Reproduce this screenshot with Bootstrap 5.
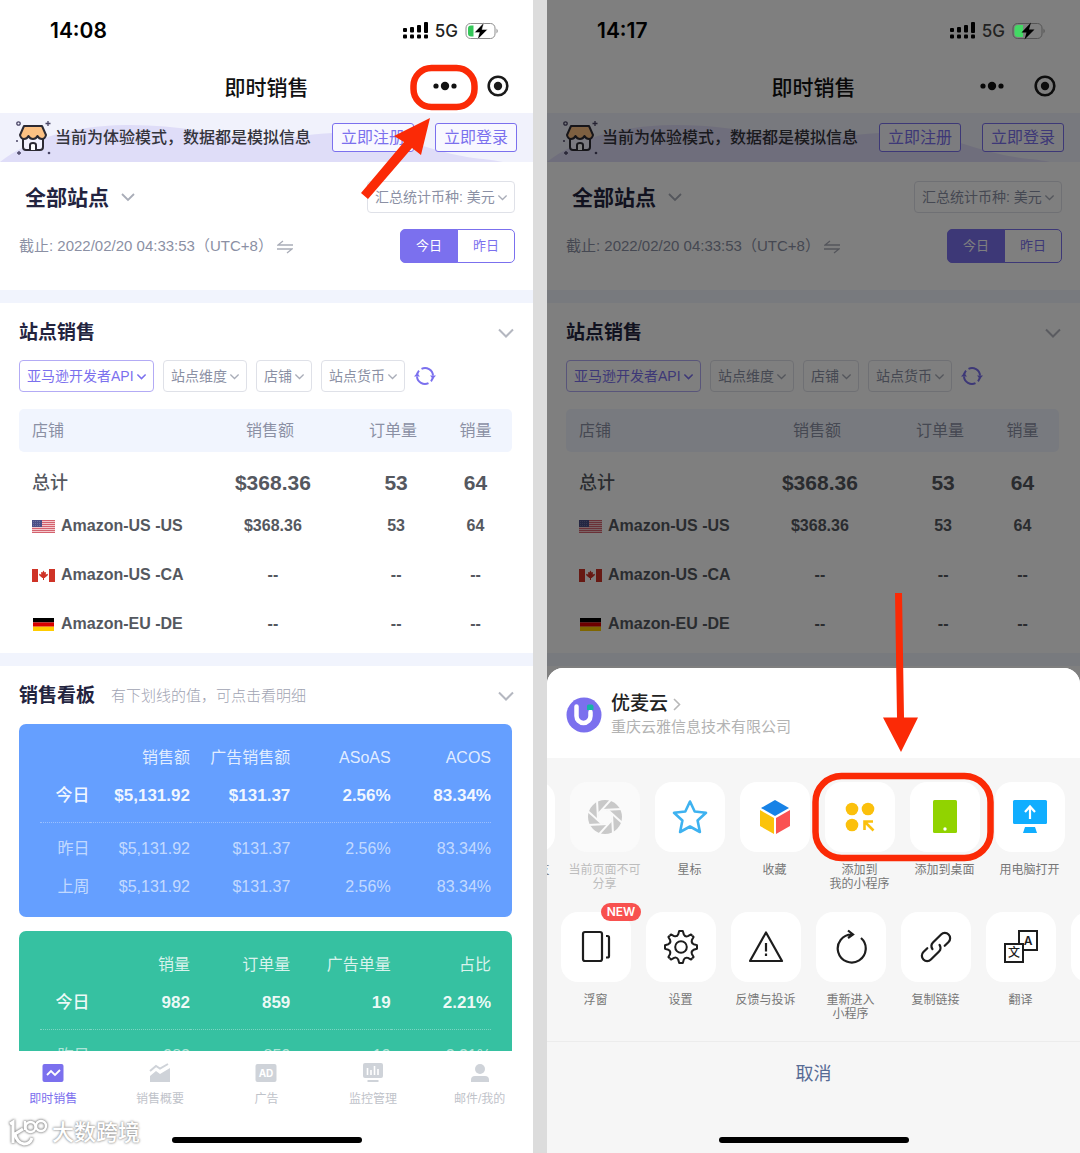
<!DOCTYPE html>
<html lang="zh-CN">
<head>
<meta charset="utf-8">
<meta name="viewport" content="width=device-width, initial-scale=1">
<title>即时销售</title>
<link rel="stylesheet" href="https://cdn.jsdelivr.net/npm/bootstrap@5.3.0/dist/css/bootstrap.min.css">
<style>
:root{--violet:#7b70ee;--ink:#23243f;--soft:#8b90a4;--band:#f1f4fd}
body{font-family:"Liberation Sans","Noto Sans CJK SC",sans-serif;background:#dcdcdc;color:#55585f;line-height:1.25}
button{font-family:inherit}
.stage{gap:14px;height:100vh;min-height:700px}
.phone{flex:1 1 0;min-width:0;background:#fff}
.statusbar{height:60px;padding:2px 34px 0 50px;color:#000;z-index:3}
.clock{font:600 21px/24px Inter,sans-serif}
.net{font:500 17px/24px Inter,sans-serif;color:#222}
.net-row{gap:7px}
.titlebar{height:53px;padding-top:2px}
.titlebar h1{font-size:21px;font-weight:500;color:#111;line-height:28px}
.capsule{right:24px;top:15px;gap:30px}
.capsule button,.plain{border:0;background:none;padding:0;line-height:0}
.trial{height:49px;padding:0 16px 0 15px;background:#f1f2fc}
.trial .wave{inset:0;width:100%;height:100%}
.trial-text{font-size:16px;font-weight:500;color:#34343c;white-space:nowrap;margin-left:4px}
.btn-trial{height:29px;padding:0 8px;border:1px solid var(--violet);border-radius:3px;color:var(--violet);font-size:16px;line-height:26px;background:#f8f8ff}
.trial-actions{gap:21px}
.filters-top{padding:19px 18px 27px 19px}
.pick{width:auto;height:32px;padding:0 19px 0 7px;border:1px solid #dfe1e8;border-radius:4px;font-size:14px;line-height:20px;color:var(--soft);background-color:#fff;background-position:right 6px center;background-size:11px 11px;background-image:url("data:image/svg+xml,%3Csvg xmlns='http://www.w3.org/2000/svg' viewBox='0 0 16 16'%3E%3Cpath d='M2 5l6 6 6-6' fill='none' stroke='%23a9adb8' stroke-width='1.8'/%3E%3C/svg%3E")}
.pick-on{color:var(--violet);border-color:#b3abf5;background-image:url("data:image/svg+xml,%3Csvg xmlns='http://www.w3.org/2000/svg' viewBox='0 0 16 16'%3E%3Cpath d='M2 5l6 6 6-6' fill='none' stroke='%237b70ee' stroke-width='2.2'/%3E%3C/svg%3E")}
.pick-site{border:0;font-size:21px;line-height:32px;font-weight:700;color:var(--ink);padding:1px 28px 0 6px;background-position:right 1px center;background-size:16px 16px}
.asof{font-size:15px;color:var(--soft);white-space:nowrap}
.day-switch .btn{width:58px;height:34px;padding:0;font-size:13px;color:var(--violet);border:1px solid var(--violet);border-radius:5px}
.day-switch .btn.active{background:var(--violet);color:#fff;border-color:var(--violet)}
.band{height:13px;background:var(--band)}
.block{padding-top:17px}
.block-head{padding:0 19px}
.block-head h2{font-size:19px;line-height:26px;font-weight:700;color:var(--ink)}
.board-head{margin-bottom:15px}
.hint{font-size:15px;color:#9fa3b2;font-weight:300}
.picks{gap:9px;padding:0 19px;margin-top:14px}
.sheet-table{table-layout:fixed;width:100%;border-collapse:separate;border-spacing:0}
.sheet-table th,.sheet-table td{padding:0;text-align:center;vertical-align:middle}
.sheet-table th:first-child{text-align:left;padding-left:13px;white-space:nowrap}
.sheet-table td:last-child,.sheet-table thead th:last-child{padding-right:4px}
.sheet-table thead th{height:43px;padding-right:6px;background:#f1f5fe;font-size:16px;font-weight:400;color:var(--soft)}
.sheet-table thead th:first-child{border-radius:5px 0 0 5px}
.sheet-table thead th:last-child{border-radius:0 5px 5px 0}
.sheet-table tbody th,.sheet-table tbody td{height:49px;font-size:16px;font-weight:700;color:#55585f}
.sheet-table .sum th,.sheet-table .sum td{padding-top:14px;font-size:21px}
.sheet-table .sum th{font-size:18px;font-weight:500}
.flag{margin-right:6px}
.sheet-wrap{padding:0 21px 5px 19px;margin-top:17px}
.panel{margin:0 21px 14px 19px;padding:15px 21px 11px;border-radius:7px}
.panel-blue{background:#659fff}
.panel-green{background:#36c1a1}
.panel table{table-layout:fixed;width:100%;border-collapse:separate;border-spacing:0;color:#fff}
.panel th,.panel td{height:38px;padding:0;text-align:right;font-size:16px;font-weight:400;white-space:nowrap;vertical-align:middle;color:rgba(255,255,255,.62)}
.panel thead th{color:rgba(255,255,255,.82)}
.panel .now th,.panel .now td{height:46px;padding-bottom:7px;border-bottom:1px dotted rgba(255,255,255,.35);font-size:17px;font-weight:700;color:rgba(255,255,255,.92)}
.panel .now th{font-weight:500}
.panel .prev th,.panel .prev td{height:45px;padding-top:7px}
.tabbar{height:102px;background:#fff;padding-top:10px}
.tabbar a{flex:1 1 0;text-decoration:none;color:#bfc3ca;font-size:12px;line-height:16px;gap:6px}
.tabbar a.on{color:var(--violet)}
.homebar{width:190px;height:6px;border-radius:3px;background:#000}
.tabbar .homebar,.share .homebar{bottom:10px;left:50%;transform:translateX(-50%)}
.stamp{left:8px;bottom:5px;gap:4px;color:#fff;font-size:22px;line-height:28px;font-weight:500;text-shadow:0 0 2px #888,0 0 3px #aaa}
.stamp svg{filter:drop-shadow(0 0 1px #888) drop-shadow(0 0 1px #aaa)}
.notes{left:0;top:0;pointer-events:none;z-index:6;overflow:visible}
.veil{inset:0;background:rgba(0,0,0,.5);z-index:2}
.share{left:0;right:0;bottom:0;height:485px;background:#f6f6f6;border-radius:16px 16px 0 0;z-index:4;overflow:hidden}
.share-head{height:90px;background:#fff;padding:4px 19px 0;gap:9px}
.share-name{font-size:19px;line-height:24px;font-weight:500;color:#222}
.share-org{font-size:15px;line-height:22px;color:#b3b3b3}
.strip{align-items:flex-start;overflow:hidden}
.strip-a{padding-top:24px;margin-left:-70px;height:145px}
.strip-b{padding:9px 0 0 6px;height:138px}
.act{flex:0 0 85px;border:0;background:none;padding:0;font-size:12px;line-height:14px;color:#777;white-space:nowrap}
.act .tile{width:70px;height:70px;border-radius:17px;background:#fff;margin:0 auto 11px}
.act:disabled{color:#bdbdbd}
.act:disabled .tile{background:#fafafa}
.tag-new{left:48px;top:-9px;z-index:1;width:40px;height:18px;border-radius:9px;background:#f8514f;color:#fff;font:600 12px/18px Inter,sans-serif;text-align:center}
.cancel{border:0;border-top:1px solid #ececec;background:#f6f6f6;width:100%;height:66px;color:#576b95;font-size:18px}
</style>
<script src="https://cdn.jsdelivr.net/npm/bootstrap@5.3.0/dist/js/bootstrap.bundle.min.js"></script>
</head>
<body>
<svg width="0" height="0" class="position-absolute" aria-hidden="true">
  <symbol id="i-signal" viewBox="0 0 26 18">
    <g fill="#000"><rect x="1" y="12.500" width="4" height="4" rx="1"/><rect x="8" y="12.500" width="4" height="4" rx="1"/><rect x="15" y="12.500" width="4" height="4" rx="1"/><rect x="22" y="12.500" width="4" height="4" rx="1"/>
    <rect x="1" y="6" width="4" height="4" rx="1"/><rect x="8" y="5" width="4" height="5.500" rx="1"/><rect x="15" y="3" width="4" height="7.500" rx="1"/><rect x="22" y="0" width="4" height="11" rx="1"/></g>
  </symbol>
  <symbol id="i-battery" viewBox="0 0 34 18">
    <rect x="1" y="1.500" width="29" height="15" rx="4.500" fill="none" stroke="#8d8d8d"/><path d="M31.500 6.500q2.500 2.500 0 5z" fill="#8d8d8d"/>
    <path d="M6 3.500H8.500V14.500H6a3 3 0 0 1-3-3v-5a3 3 0 0 1 3-3z" fill="#34c759"/>
    <path d="M19 0.500L9.500 10.500h5L12.500 17.500 22.500 7.500h-5.500z" fill="#000" stroke="#fff" stroke-opacity=".5" stroke-width=".8"/>
  </symbol>
  <symbol id="i-battery-dim" viewBox="0 0 34 18">
    <rect x="1" y="1.500" width="29" height="15" rx="4.500" fill="none" stroke="#555"/><path d="M31.500 6.500q2.500 2.500 0 5z" fill="#555"/>
    <path d="M6 3H11V15H6a3.500 3.500 0 0 1-3.500-3.500v-5A3.500 3.500 0 0 1 6 3z" fill="#43d964"/>
    <path d="M19 0.500L9.500 10.500h5L12.500 17.500 22.500 7.500h-5.500z" fill="#000"/>
  </symbol>
  <symbol id="i-dots" viewBox="0 0 24 22"><g fill="#111"><circle cx="3" cy="11" r="2.600"/><circle cx="12" cy="11" r="4.200"/><circle cx="21" cy="11" r="2.600"/></g></symbol>
  <symbol id="i-target" viewBox="0 0 22 22"><circle cx="11" cy="11" r="9.300" fill="none" stroke="#1a1a1a" stroke-width="2.600"/><circle cx="11" cy="11" r="4.200" fill="#1a1a1a"/></symbol>
  <symbol id="i-store" viewBox="0 0 36 36">
    <path d="M8 18v9q0 3 3 3h14q3 0 3-3v-9" fill="#f4f3ff" stroke="#2c2a33" stroke-width="2"/>
    <path d="M9 6h18l4 9q-1 4-4 4t-4.500-3q-1.500 3-4.500 3t-4.500-3q-1.500 3-4.500 3t-4-4z" fill="#fcc183" stroke="#2c2a33" stroke-width="2" stroke-linejoin="round"/>
    <path d="M15 30v-5q0-2 3-2t3 2v5" fill="#fff" stroke="#2c2a33" stroke-width="2"/>
    <g stroke="#4a4666" stroke-width="1.300" fill="none"><circle cx="3.500" cy="3.500" r="1.700"/><path d="M33 1v5M30.500 3.500h5M4 31v4M2 33h4"/></g><circle cx="34" cy="33" r="1.300" fill="#4a4666"/><circle cx="2" cy="21" r="1" fill="#4a4666"/>
  </symbol>
  <symbol id="i-down" viewBox="0 0 16 16"><path d="M1 4.500l7 7 7-7" fill="none" stroke="#b4b7c0" stroke-width="2"/></symbol>
  <symbol id="i-swap" viewBox="0 0 16 14"><path d="M16 5H1L6 1M0 9H15L10 13" fill="none" stroke="#a9adb8" stroke-width="1.300"/></symbol>
  <symbol id="i-refresh" viewBox="0 0 22 20"><g fill="none" stroke="#7b70ee" stroke-width="2"><path d="M3 10A8 8 0 0 1 5 4.700M7.500 2.800A8 8 0 0 1 19 9.500"/><path d="M19 10A8 8 0 0 1 17 15.300M14.500 17.200A8 8 0 0 1 3 10.500"/></g><path d="M0 10.500L3 7l3 3.500zM16 9.500h6L19 13z" fill="#7b70ee"/></symbol>
  <symbol id="f-us" viewBox="0 0 23 13"><rect width="23" height="13" fill="#f3c9cd"/><path d="M0 .500h23M0 2.500h23M0 4.500h23M0 6.500h23M0 8.500h23M0 10.500h23M0 12.500h23" stroke="#d4626e"/><rect width="10" height="7" fill="#4b4f86"/><path d="M1 1.500h8M1 3.500h8M1 5.500h8" stroke="#8587ae" stroke-width=".6" stroke-dasharray="1 1"/></symbol>
  <symbol id="f-ca" viewBox="0 0 23 13"><rect width="23" height="13" fill="#fff"/><path d="M0 0h6v13H0zM17 0h6v13h-6zM11.500 1.500l1.200 2 1.300-.5-.3 2.500 2.300-.8-.4 1.800-3 2.500h-.6V11h-1V9h-.6l-3-2.500L7 4.700l2.300.8L9 3l1.300.5z" fill="#cf3327"/></symbol>
  <symbol id="f-de" viewBox="0 0 23 13"><rect x="1" width="21" height="4.400" fill="#000"/><rect x="1" y="4.400" width="21" height="4.300" fill="#d80000"/><rect x="1" y="8.700" width="21" height="4.300" fill="#fc0"/></symbol>
</svg>

<div class="stage d-flex">
  <!-- Phone one: the page itself -->
  <section class="phone position-relative d-flex flex-column overflow-hidden" aria-label="14:08">
    <header class="statusbar d-flex align-items-center justify-content-between position-relative flex-shrink-0">
      <span class="clock">14:08</span>
      <span class="net-row d-flex align-items-center"><svg width="26" height="18"><use href="#i-signal"/></svg><span class="net">5G</span><svg width="34" height="18"><use href="#i-battery"/></svg></span>
    </header>
    <div class="titlebar position-relative d-flex align-items-center justify-content-center flex-shrink-0">
      <h1 class="m-0">即时销售</h1>
      <div class="capsule position-absolute d-flex"><button type="button" aria-label="更多"><svg width="24" height="22"><use href="#i-dots"/></svg></button><button type="button" aria-label="关闭"><svg width="22" height="22"><use href="#i-target"/></svg></button></div>
    </div>
    <div class="trial position-relative d-flex align-items-center flex-shrink-0">
      <svg class="wave position-absolute" viewBox="0 0 533 49" preserveAspectRatio="none" aria-hidden="true"><path d="M0 49C30 26 70 13 125 12S230 24 270 30C320 16 370 16 420 32S480 44 503 49z" fill="#dfddf8"/></svg>
      <svg class="position-relative flex-shrink-0" width="36" height="36"><use href="#i-store"/></svg>
      <span class="trial-text position-relative">当前为体验模式，数据都是模拟信息</span>
      <div class="trial-actions d-flex ms-auto position-relative"><button type="button" class="btn btn-trial">立即注册</button><button type="button" class="btn btn-trial">立即登录</button></div>
    </div>
    <main class="flex-grow-1 overflow-hidden">
      <div class="filters-top">
        <div class="d-flex justify-content-between">
          <select class="form-select pick pick-site" aria-label="站点"><option>全部站点</option></select>
          <select class="form-select pick" aria-label="币种"><option>汇总统计币种: 美元</option></select>
        </div>
        <div class="d-flex justify-content-between align-items-center mt-3">
          <span class="asof">截止: 2022/02/20 04:33:53（UTC+8）<button type="button" class="plain ms-1" aria-label="切换时区"><svg width="16" height="14"><use href="#i-swap"/></svg></button></span>
          <div class="btn-group day-switch"><button type="button" class="btn active">今日</button><button type="button" class="btn">昨日</button></div>
        </div>
      </div>
      <div class="band"></div>
      <section class="block">
        <div class="block-head d-flex align-items-center justify-content-between"><h2 class="m-0">站点销售</h2><button type="button" class="plain" aria-label="收起站点销售"><svg width="16" height="16"><use href="#i-down"/></svg></button></div>
        <div class="picks d-flex align-items-center">
          <select class="form-select pick pick-on" aria-label="数据来源"><option>亚马逊开发者API</option></select>
          <select class="form-select pick" aria-label="维度"><option>站点维度</option></select>
          <select class="form-select pick" aria-label="店铺"><option>店铺</option></select>
          <select class="form-select pick" aria-label="货币"><option>站点货币</option></select>
          <button type="button" class="plain" aria-label="刷新"><svg width="22" height="20"><use href="#i-refresh"/></svg></button>
        </div>
        <div class="sheet-wrap">
          <table class="sheet-table">
            <colgroup><col style="width:36%"><col style="width:31%"><col style="width:19%"><col style="width:14%"></colgroup>
            <thead><tr><th>店铺</th><th>销售额</th><th>订单量</th><th>销量</th></tr></thead>
            <tbody>
              <tr class="sum"><th>总计</th><td>$368.36</td><td>53</td><td>64</td></tr>
              <tr><th><svg class="flag" width="23" height="13"><use href="#f-us"/></svg>Amazon-US -US</th><td>$368.36</td><td>53</td><td>64</td></tr>
              <tr><th><svg class="flag" width="23" height="13"><use href="#f-ca"/></svg>Amazon-US -CA</th><td>--</td><td>--</td><td>--</td></tr>
              <tr><th><svg class="flag" width="23" height="13"><use href="#f-de"/></svg>Amazon-EU -DE</th><td>--</td><td>--</td><td>--</td></tr>
            </tbody>
          </table>
        </div>
      </section>
      <div class="band"></div>
      <section class="block">
        <div class="block-head board-head d-flex align-items-center"><h2 class="m-0">销售看板</h2><span class="hint ms-3">有下划线的值，可点击看明细</span><button type="button" class="plain ms-auto" aria-label="收起销售看板"><svg width="16" height="16"><use href="#i-down"/></svg></button></div>
        <div class="panel panel-blue">
          <table>
            <colgroup><col style="width:11%"><col><col><col><col></colgroup>
            <thead><tr><th></th><th>销售额</th><th>广告销售额</th><th>ASoAS</th><th>ACOS</th></tr></thead>
            <tbody>
              <tr class="now"><th>今日</th><td>$5,131.92</td><td>$131.37</td><td>2.56%</td><td>83.34%</td></tr>
              <tr class="prev"><th>昨日</th><td>$5,131.92</td><td>$131.37</td><td>2.56%</td><td>83.34%</td></tr>
              <tr><th>上周</th><td>$5,131.92</td><td>$131.37</td><td>2.56%</td><td>83.34%</td></tr>
            </tbody>
          </table>
        </div>
        <div class="panel panel-green">
          <table>
            <colgroup><col style="width:11%"><col><col><col><col></colgroup>
            <thead><tr><th></th><th>销量</th><th>订单量</th><th>广告单量</th><th>占比</th></tr></thead>
            <tbody>
              <tr class="now"><th>今日</th><td>982</td><td>859</td><td>19</td><td>2.21%</td></tr>
              <tr class="prev"><th>昨日</th><td>982</td><td>859</td><td>19</td><td>2.21%</td></tr>
            </tbody>
          </table>
        </div>
      </section>
    </main>
    <nav class="tabbar position-relative d-flex align-items-start flex-shrink-0" aria-label="主导航">
      <a class="on d-flex flex-column align-items-center" href="#"><svg width="22" height="24" viewBox="0 0 22 24"><rect x="0.500" y="3" width="21" height="18" rx="2" fill="#7b70ee"/><path d="M5 14l4-4 4 4 5-5" fill="none" stroke="#fff" stroke-width="1.800"/></svg>即时销售</a>
      <a class="d-flex flex-column align-items-center" href="#"><svg width="22" height="24" viewBox="0 0 22 24"><path d="M1 21v-6l6-5 4 3 10-6v14z" fill="#cfd3d9"/><path d="M1 10l6-5 4 2.500L19 3" fill="none" stroke="#cfd3d9" stroke-width="2"/></svg>销售概要</a>
      <a class="d-flex flex-column align-items-center" href="#"><svg width="22" height="24" viewBox="0 0 22 24"><rect x="0.500" y="3" width="21" height="18" rx="2" fill="#cfd3d9"/><text x="11" y="16" text-anchor="middle" font-family="Inter,sans-serif" font-weight="700" font-size="10" fill="#fff">AD</text></svg>广告</a>
      <a class="d-flex flex-column align-items-center" href="#"><svg width="22" height="24" viewBox="0 0 22 24"><rect x="1" y="2" width="20" height="15" rx="2" fill="#cfd3d9"/><path d="M5.500 7v7M9 9v5M12.500 5v9M16 8v6" stroke="#fff" stroke-width="1.600"/><path d="M5.500 20h11" stroke="#cfd3d9" stroke-width="2"/></svg>监控管理</a>
      <a class="d-flex flex-column align-items-center" href="#"><svg width="22" height="24" viewBox="0 0 22 24"><circle cx="11" cy="8" r="5" fill="#cfd3d9"/><path d="M2 21v-2q0-4 4-4h10q4 0 4 4v2z" fill="#cfd3d9"/></svg>邮件/我的</a>
      <div class="homebar position-absolute"></div>
    </nav>
    <div class="stamp position-absolute d-flex align-items-center"><svg width="40" height="30" viewBox="0 0 40 30" fill="none" stroke="#fff" stroke-width="3"><path d="M2 6l3-2v21M15 11l-8 5q2 9 9 10 6 0 8-6"/><path d="M17 3v9" stroke-width="2.400"/><circle cx="22.500" cy="9" r="5" stroke-width="2.400"/><circle cx="33" cy="8" r="5" stroke-width="2.400"/></svg>大数跨境</div>
    <svg class="notes position-absolute" width="533" height="220" aria-hidden="true"><rect x="413.500" y="68" width="61" height="39" rx="18" fill="none" stroke="#fb2a06" stroke-width="6.500"/><path d="M361 193L404 142 394 136 430 118 421 155 412 148 368 199z" fill="#fb2a06"/></svg>
  </section>

  <!-- Phone two: the same page under the share sheet -->
  <section class="phone position-relative d-flex flex-column overflow-hidden" aria-label="14:17">
    <header class="statusbar d-flex align-items-center justify-content-between position-relative flex-shrink-0">
      <span class="clock">14:17</span>
      <span class="net-row d-flex align-items-center"><svg width="26" height="18"><use href="#i-signal"/></svg><span class="net">5G</span><svg width="34" height="18"><use href="#i-battery-dim"/></svg></span>
    </header>
    <div class="titlebar position-relative d-flex align-items-center justify-content-center flex-shrink-0">
      <h1 class="m-0">即时销售</h1>
      <div class="capsule position-absolute d-flex"><button type="button" aria-label="更多"><svg width="24" height="22"><use href="#i-dots"/></svg></button><button type="button" aria-label="关闭"><svg width="22" height="22"><use href="#i-target"/></svg></button></div>
    </div>
    <div class="trial position-relative d-flex align-items-center flex-shrink-0">
      <svg class="wave position-absolute" viewBox="0 0 533 49" preserveAspectRatio="none" aria-hidden="true"><path d="M0 49C30 26 70 13 125 12S230 24 270 30C320 16 370 16 420 32S480 44 503 49z" fill="#dfddf8"/></svg>
      <svg class="position-relative flex-shrink-0" width="36" height="36"><use href="#i-store"/></svg>
      <span class="trial-text position-relative">当前为体验模式，数据都是模拟信息</span>
      <div class="trial-actions d-flex ms-auto position-relative"><button type="button" class="btn btn-trial">立即注册</button><button type="button" class="btn btn-trial">立即登录</button></div>
    </div>
    <main class="flex-grow-1 overflow-hidden">
      <div class="filters-top">
        <div class="d-flex justify-content-between">
          <select class="form-select pick pick-site" aria-label="站点"><option>全部站点</option></select>
          <select class="form-select pick" aria-label="币种"><option>汇总统计币种: 美元</option></select>
        </div>
        <div class="d-flex justify-content-between align-items-center mt-3">
          <span class="asof">截止: 2022/02/20 04:33:53（UTC+8）<button type="button" class="plain ms-1" aria-label="切换时区"><svg width="16" height="14"><use href="#i-swap"/></svg></button></span>
          <div class="btn-group day-switch"><button type="button" class="btn active">今日</button><button type="button" class="btn">昨日</button></div>
        </div>
      </div>
      <div class="band"></div>
      <section class="block">
        <div class="block-head d-flex align-items-center justify-content-between"><h2 class="m-0">站点销售</h2><button type="button" class="plain" aria-label="收起站点销售"><svg width="16" height="16"><use href="#i-down"/></svg></button></div>
        <div class="picks d-flex align-items-center">
          <select class="form-select pick pick-on" aria-label="数据来源"><option>亚马逊开发者API</option></select>
          <select class="form-select pick" aria-label="维度"><option>站点维度</option></select>
          <select class="form-select pick" aria-label="店铺"><option>店铺</option></select>
          <select class="form-select pick" aria-label="货币"><option>站点货币</option></select>
          <button type="button" class="plain" aria-label="刷新"><svg width="22" height="20"><use href="#i-refresh"/></svg></button>
        </div>
        <div class="sheet-wrap">
          <table class="sheet-table">
            <colgroup><col style="width:36%"><col style="width:31%"><col style="width:19%"><col style="width:14%"></colgroup>
            <thead><tr><th>店铺</th><th>销售额</th><th>订单量</th><th>销量</th></tr></thead>
            <tbody>
              <tr class="sum"><th>总计</th><td>$368.36</td><td>53</td><td>64</td></tr>
              <tr><th><svg class="flag" width="23" height="13"><use href="#f-us"/></svg>Amazon-US -US</th><td>$368.36</td><td>53</td><td>64</td></tr>
              <tr><th><svg class="flag" width="23" height="13"><use href="#f-ca"/></svg>Amazon-US -CA</th><td>--</td><td>--</td><td>--</td></tr>
              <tr><th><svg class="flag" width="23" height="13"><use href="#f-de"/></svg>Amazon-EU -DE</th><td>--</td><td>--</td><td>--</td></tr>
            </tbody>
          </table>
        </div>
      </section>
      <div class="band"></div>
    </main>
    <div class="veil position-absolute"></div>

    <div class="share position-absolute" role="dialog" aria-label="优麦云">
      <div class="share-head d-flex align-items-center">
        <svg width="36" height="36" viewBox="0 0 36 36"><circle cx="18" cy="18" r="17.500" fill="#7b70ee"/><path d="M10.500 9.500v9.500a7 7 0 0 0 14 0V15" fill="none" stroke="#fff" stroke-width="4.500" stroke-linecap="round"/><path d="M21 9q0-1.500 1.500-1.500h3q2 0 2 2V13H21z" fill="#15b5a6"/></svg>
        <div><div class="share-name">优麦云 <svg width="8" height="13" viewBox="0 0 8 13"><path d="M1 1l5.500 5.500L1 12" fill="none" stroke="#b8b8b8" stroke-width="1.600"/></svg></div><div class="share-org">重庆云雅信息技术有限公司</div></div>
      </div>
      <div class="strip strip-a d-flex">
        <button type="button" class="act"><span class="tile d-block"></span>分享给朋友</button>
        <button type="button" class="act" disabled><span class="tile d-flex align-items-center justify-content-center"><svg width="36" height="36" viewBox="-18 -18 36 36"><circle r="17" fill="#c9c9c9"/><circle r="7" fill="#fafafa"/><g fill="none" stroke="#fafafa" stroke-width="2"><path id="blade" d="M-3-7L17-8"/><use href="#blade" transform="rotate(45)"/><use href="#blade" transform="rotate(90)"/><use href="#blade" transform="rotate(135)"/><use href="#blade" transform="rotate(180)"/><use href="#blade" transform="rotate(225)"/><use href="#blade" transform="rotate(270)"/><use href="#blade" transform="rotate(315)"/></g></svg></span>当前页面不可<br>分享</button>
        <button type="button" class="act"><span class="tile d-flex align-items-center justify-content-center"><svg width="36" height="36" viewBox="-18 -18 36 36"><path d="M0-15.500L4.700-5.500 16-4.200 7.600 3.500 9.900 15 0 9.500-9.900 15-7.600 3.500-16-4.200-4.700-5.500z" fill="none" stroke="#3eb2f0" stroke-width="2.600" stroke-linejoin="round"/></svg></span>星标</button>
        <button type="button" class="act"><span class="tile d-flex align-items-center justify-content-center"><svg width="36" height="36" viewBox="-18 -18 36 36"><path d="M0-17L14-9 0-1-14-9z" fill="#1782e6"/><path d="M-15-7L-1 1V17L-15 9z" fill="#fbc30b"/><path d="M15-7L1 1V17L15 9z" fill="#fa5252"/></svg></span>收藏</button>
        <button type="button" class="act"><span class="tile d-flex align-items-center justify-content-center"><svg width="36" height="36" viewBox="-18 -18 36 36"><g fill="#fbc00c"><circle cx="-8" cy="-8" r="6.300"/><circle cx="8" cy="-8" r="6.300"/><circle cx="-8" cy="8" r="6.300"/></g><path d="M4.500 13V4.500H13M5 5l8.500 8.500" fill="none" stroke="#fbc00c" stroke-width="2.600"/></svg></span>添加到<br>我的小程序</button>
        <button type="button" class="act"><span class="tile d-flex align-items-center justify-content-center"><svg width="36" height="36" viewBox="-18 -18 36 36"><rect x="-12" y="-17" width="24" height="33" rx="1.500" fill="#91d300"/><circle cy="12" r="1.700" fill="#fff"/></svg></span>添加到桌面</button>
        <button type="button" class="act"><span class="tile d-flex align-items-center justify-content-center"><svg width="36" height="36" viewBox="-18 -18 36 36"><rect x="-17" y="-17" width="34" height="24" rx="1.500" fill="#10aeff"/><path d="M-5 10H5l2 6H-7z" fill="#10aeff"/><path d="M0 2V-10M-5-5L0-10.500 5-5" fill="none" stroke="#fff" stroke-width="2.200"/></svg></span>用电脑打开</button>
      </div>
      <div class="strip strip-b d-flex">
        <button type="button" class="act position-relative"><span class="tile d-flex align-items-center justify-content-center"><svg width="36" height="36" viewBox="-18 -18 36 36" fill="none" stroke="#1d1d1d" stroke-width="2.200"><rect x="-13" y="-15" width="19" height="29" rx="2"/><path d="M10-11h1.500q1.500 0 1.500 1.500V9q0 1.500-1.500 1.500H10"/></svg></span>浮窗<span class="tag-new position-absolute">NEW</span></button>
        <button type="button" class="act"><span class="tile d-flex align-items-center justify-content-center"><svg width="36" height="36" viewBox="-18 -18 36 36" fill="none" stroke="#1d1d1d" stroke-width="2" stroke-linejoin="round"><circle r="5.800"/><path id="cog" d="M0-16H1.800L2.800-12.600Q4.400-9.800 6.900-10.900L10-12.600 11.300-11.300"/><use href="#cog" transform="rotate(45)"/><use href="#cog" transform="rotate(90)"/><use href="#cog" transform="rotate(135)"/><use href="#cog" transform="rotate(180)"/><use href="#cog" transform="rotate(225)"/><use href="#cog" transform="rotate(270)"/><use href="#cog" transform="rotate(315)"/></svg></span>设置</button>
        <button type="button" class="act"><span class="tile d-flex align-items-center justify-content-center"><svg width="36" height="36" viewBox="-18 -18 36 36" fill="none" stroke="#1d1d1d" stroke-width="2.200" stroke-linejoin="round"><path d="M0-14.500L16 14H-16z"/><path d="M0-4V4.500M0 6.500v2.500"/></svg></span>反馈与投诉</button>
        <button type="button" class="act"><span class="tile d-flex align-items-center justify-content-center"><svg width="36" height="36" viewBox="-18 -18 36 36" fill="none" stroke="#1d1d1d" stroke-width="2.200"><path d="M10-9A14 14 0 1 1 1-12.500M-3-16.500L2-12.500-3-9"/></svg></span>重新进入<br>小程序</button>
        <button type="button" class="act"><span class="tile d-flex align-items-center justify-content-center"><svg width="36" height="36" viewBox="-18 -18 36 36" fill="none" stroke="#1d1d1d" stroke-width="2.200" stroke-linecap="round"><g transform="rotate(45)"><path id="ring" d="M-1 4Q-5.300 3-5.300-1V-12.500a5.300 5.300 0 0 1 10.600 0V-7"/><use href="#ring" transform="rotate(180)"/></g></svg></span>复制链接</button>
        <button type="button" class="act"><span class="tile d-flex align-items-center justify-content-center"><svg width="36" height="36" viewBox="-18 -18 36 36"><g fill="none" stroke="#1d1d1d" stroke-width="2"><path d="M-2-3v-13H16V3H3"/><rect x="-16" y="-3" width="18" height="18"/></g><text x="7" y="-2" text-anchor="middle" font-family="Inter,sans-serif" font-weight="600" font-size="12" fill="#1d1d1d">A</text><text x="-7" y="10" text-anchor="middle" font-family="Noto Sans CJK SC,sans-serif" font-weight="500" font-size="12" fill="#1d1d1d">文</text></svg></span>翻译</button>
        <button type="button" class="act" aria-label="更多"><span class="tile d-block"></span></button>
      </div>
      <button type="button" class="cancel">取消</button>
      <div class="homebar position-absolute"></div>
    </div>
    <svg class="notes position-absolute" width="533" height="880" aria-hidden="true"><rect x="268.500" y="776" width="175" height="82" rx="26" fill="none" stroke="#fb2a06" stroke-width="6.500"/><path d="M348 593h7l2 124.500h14L354 752 336 717.500h14z" fill="#fb2a06"/></svg>
  </section>
</div>
</body>
</html>
